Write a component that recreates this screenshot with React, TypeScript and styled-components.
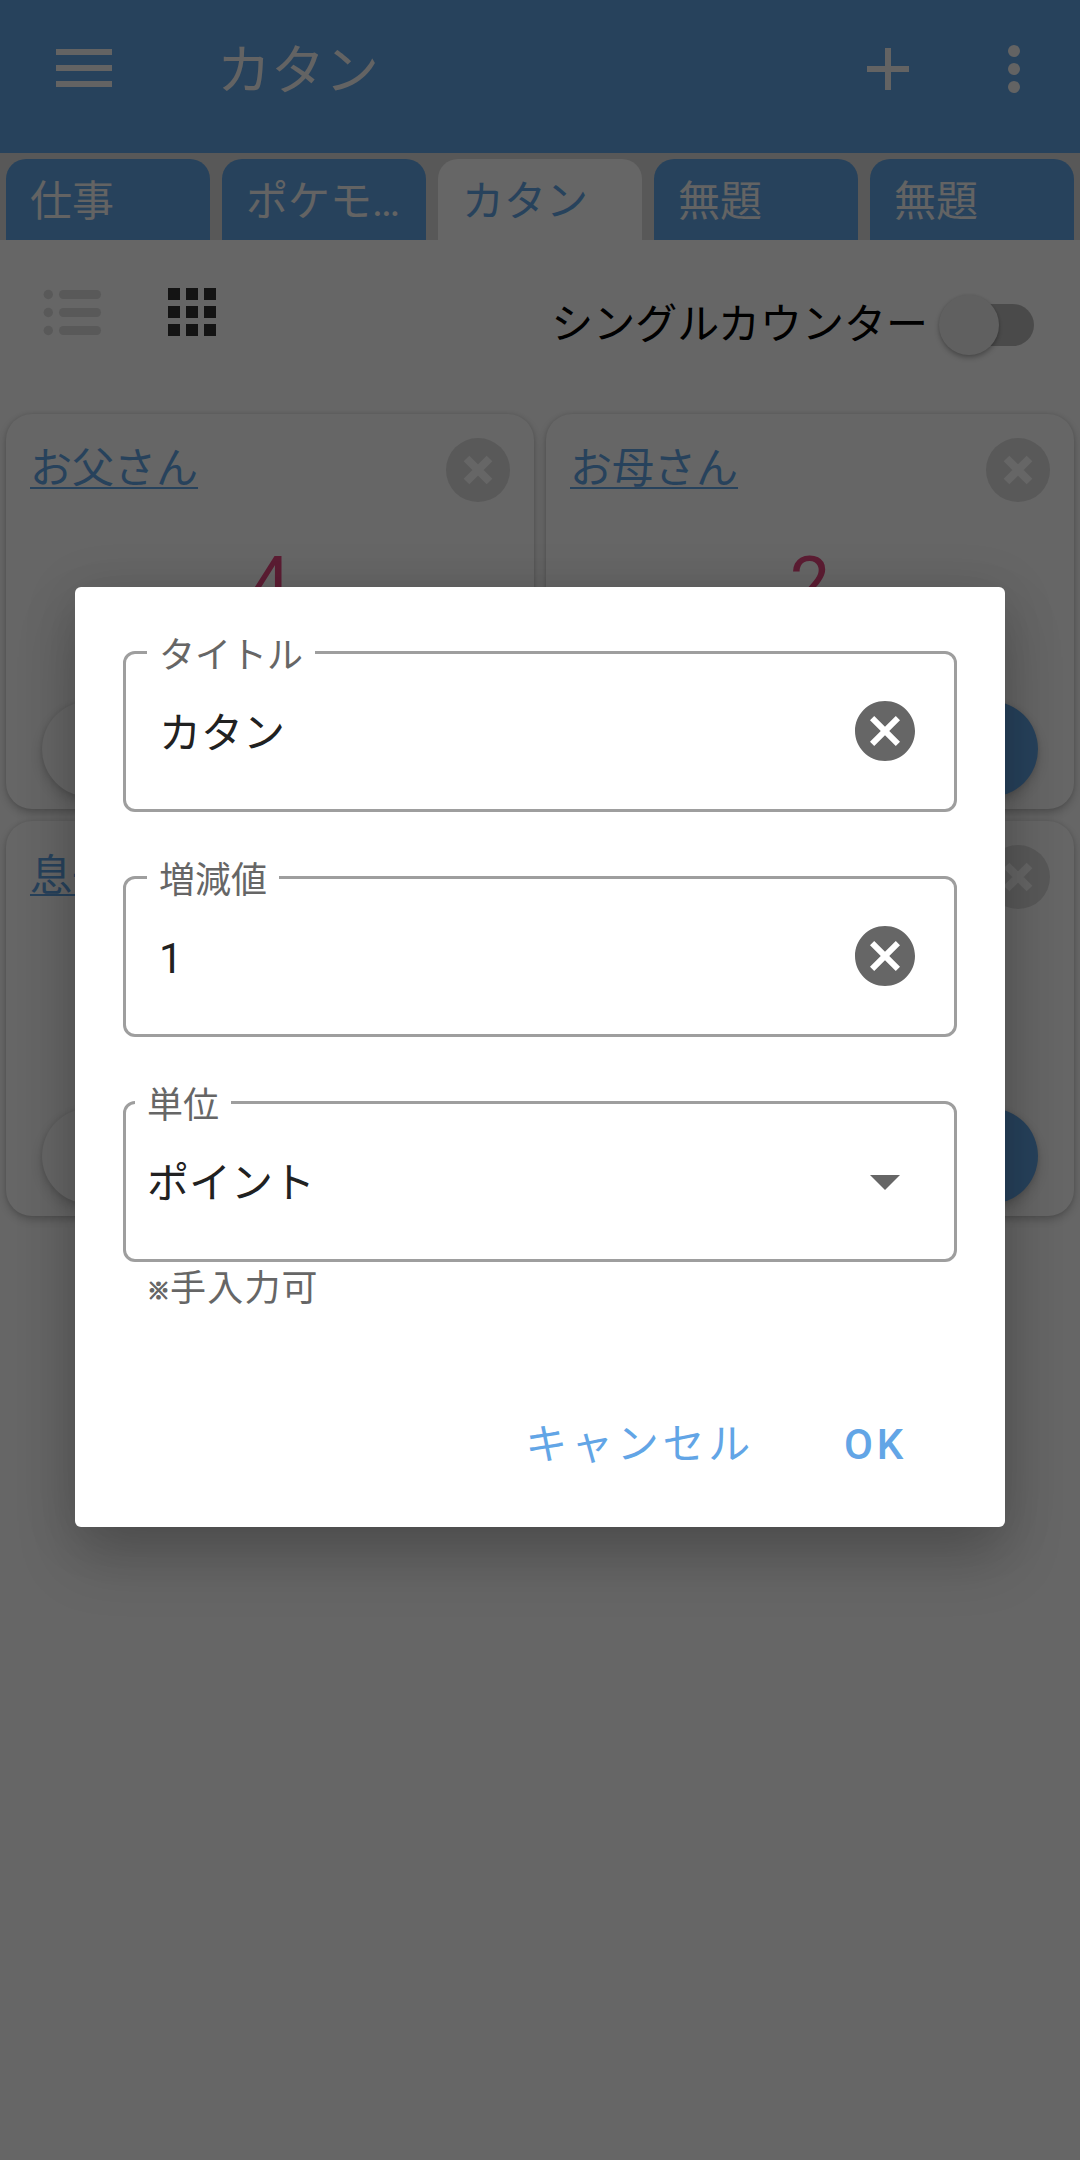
import React from 'react';
import styled, { createGlobalStyle } from 'styled-components';
import { MdCancel, MdArrowDropDown } from 'react-icons/md';

const primary = '#62a5e6';

const GlobalStyle = createGlobalStyle`
  * { box-sizing: border-box; }
  body {
    margin: 0;
    background: #fefefe;
    font-family: Roboto, 'Noto Sans CJK JP', sans-serif;
    font-size: 42px;
    line-height: 60px;
  }
  button { font: inherit; border: 0; padding: 0; background: none; }
`;

const Screen = styled.div`
  position: relative;
  width: 1080px;
  height: 2160px;
  overflow: hidden;
  background: #fefefe;
  display: flex;
  flex-direction: column;
`;

const AppBar = styled.header`
  height: 153px;
  padding: 0 60px 15px 56px;
  background: ${primary};
  color: #f8f8f8;
  display: flex;
  align-items: center;
`;

const AppTitle = styled.h1`
  flex: 1;
  margin: 5px 0 0 105px;
  font-size: 54px;
  font-weight: 400;
  line-height: 72px;
`;

const BarIcon = styled.svg<{ $gap?: number; $lift?: number }>`
  display: block;
  flex: none;
  margin-left: ${(p) => p.$gap ?? 0}px;
  margin-bottom: ${(p) => p.$lift ?? 0}px;
`;

const TabStrip = styled.nav`
  height: 87px;
  padding: 6px 6px 0;
  background: #dcdcdc;
  display: grid;
  grid-template-columns: repeat(5, 1fr);
  column-gap: 12px;
`;

const Tab = styled.div<{ $active: boolean }>`
  min-width: 0;
  padding: 13px 24px 0;
  border-radius: 20px 20px 0 0;
  background: ${(p) => (p.$active ? '#fefefe' : primary)};
  color: ${(p) => (p.$active ? primary : '#f8f8f8')};
  white-space: nowrap;
`;

const Toolbar = styled.div`
  height: 168px;
  padding: 0 46px 0 43px;
  display: flex;
  align-items: flex-start;
`;

const ViewIcons = styled.div`
  flex: 1;
  padding-top: 48px;
  display: flex;
  gap: 66px;
`;

const SwitchLabel = styled.label`
  padding-top: 55px;
  display: flex;
  align-items: center;
  gap: 10px;
  color: #000;
`;

const SwitchTrack = styled.span`
  width: 86px;
  height: 42px;
  margin: 0 0 1px 10px;
  border-radius: 21px;
  background: #bababa;
  display: flex;
  align-items: center;
`;

const SwitchThumb = styled.span`
  width: 60px;
  height: 60px;
  margin-left: -9px;
  border-radius: 50%;
  background: #f1f1f1;
  box-shadow: 0 3px 5px rgba(0, 0, 0, 0.25), 0 0 3px rgba(0, 0, 0, 0.1);
`;

const CardGrid = styled.main`
  padding: 6px;
  display: grid;
  grid-template-columns: 1fr 1fr;
  gap: 12px;
`;

const Card = styled.article`
  height: 395px;
  padding: 24px 24px 12px;
  border-radius: 26px;
  background: #fefefe;
  box-shadow: 0 4px 9px rgba(0, 0, 0, 0.2), 0 0 4px rgba(0, 0, 0, 0.11);
  display: flex;
  flex-direction: column;
`;

const CardHead = styled.div`
  display: flex;
  justify-content: space-between;
  align-items: flex-start;
`;

const CardName = styled.a`
  margin-top: 1px;
  color: ${primary};
  text-decoration: underline;
  text-decoration-thickness: 2px;
  text-underline-offset: 4px;
  text-decoration-skip-ink: none;
`;

const Count = styled.div`
  margin-top: 40px;
  color: #e64980;
  font-size: 72px;
  line-height: 84px;
  text-align: center;
`;

const Stepper = styled.div`
  margin-top: auto;
  padding: 0 12px;
  display: flex;
  justify-content: space-between;
`;

const RoundButton = styled.button<{ $filled?: boolean }>`
  width: 96px;
  height: 96px;
  border-radius: 50%;
  background: ${(p) => (p.$filled ? primary : '#fefefe')};
  color: ${(p) => (p.$filled ? '#fff' : primary)};
  box-shadow: 0 6px 12px rgba(0, 0, 0, 0.18), 0 0 5px rgba(0, 0, 0, 0.1);
`;

const Scrim = styled.div`
  position: absolute;
  inset: 0;
  background: rgba(0, 0, 0, 0.6);
  padding: 587px 75px 0;
`;

const Dialog = styled.section`
  height: 940px;
  padding: 40px 48px 0;
  border-radius: 6px;
  background: #fff;
  box-shadow: 0 32px 60px rgba(0, 0, 0, 0.18), 0 6px 54px rgba(0, 0, 0, 0.13);
  display: flex;
  flex-direction: column;
`;

const Outline = styled.fieldset`
  height: 185px;
  margin: 0 0 40px;
  padding: 0;
  border: 3px solid #9e9e9e;
  border-radius: 12px;
  min-width: 0;
`;

const OutlineLabel = styled.legend<{ $start: number }>`
  height: 51px;
  margin-left: ${(p) => p.$start}px;
  padding: 0 12px;
  color: #666;
  font-size: 36px;
  line-height: 58px;
`;

const FieldRow = styled.div<{ $start: number }>`
  height: 106px;
  padding: 0 33px 0 ${(p) => p.$start}px;
  display: flex;
  align-items: center;
  justify-content: space-between;
  color: #212121;
  svg { display: block; color: #666; }
`;

const FieldValue = styled.span`
  padding-top: 6px;
`;

const Helper = styled.p`
  margin: -38px 0 0 24px;
  color: #666;
  font-size: 36px;
  line-height: 51px;
  letter-spacing: 1.2px;
`;

const NoteMark = styled.span`
  font-size: 23px;
  letter-spacing: 0;
  vertical-align: 2px;
  -webkit-text-stroke: 1.2px #666;
`;

const Actions = styled.div`
  margin-top: 98px;
  padding-right: 50px;
  display: flex;
  justify-content: flex-end;
  gap: 90px;
`;

const TextButton = styled.button`
  color: ${primary};
  font-weight: 500;
  letter-spacing: 3.75px;
  line-height: 60px;
`;

const KanaText = styled.span`
  font-weight: 400;
`;

const RemoveIcon = () => (
  <svg width="64" height="64" viewBox="0 0 64 64">
    <circle cx="32" cy="32" r="32" fill="#dedede" />
    <path d="M20.5 20.5l23 23M43.5 20.5l-23 23" stroke="#fefefe" strokeWidth="8" />
  </svg>
);

const tabs = ['仕事', 'ポケモ…', 'カタン', '無題', '無題'];
const counters = [
  { name: 'お父さん', value: 4 },
  { name: 'お母さん', value: 2 },
  { name: '息子', value: 3 },
  { name: '娘', value: 5 },
];
const fields = [
  { label: 'タイトル', value: 'カタン' },
  { label: '増減値', value: '1' },
];

export default function App() {
  return (
    <>
      <GlobalStyle />
      <Screen>
        <AppBar>
          <BarIcon $lift={2} width="56" height="38" viewBox="0 0 56 38" fill="currentColor">
            <path d="M0 0h56v6H0zM0 16h56v6H0zM0 32h56v6H0z" />
          </BarIcon>
          <AppTitle>カタン</AppTitle>
          <BarIcon width="42" height="42" viewBox="0 0 42 42" fill="currentColor">
            <path d="M18 0h6v18h18v6H24v18h-6V24H0v-6h18z" />
          </BarIcon>
          <BarIcon $gap={99} width="12" height="48" viewBox="0 0 12 48" fill="currentColor">
            <circle cx="6" cy="6" r="6" />
            <circle cx="6" cy="24" r="6" />
            <circle cx="6" cy="42" r="6" />
          </BarIcon>
        </AppBar>
        <TabStrip>
          {tabs.map((t, i) => (
            <Tab key={i} $active={i === 2}>{t}</Tab>
          ))}
        </TabStrip>
        <Toolbar>
          <ViewIcons>
            <svg width="59" height="48" viewBox="0 0 59 48" fill="#dedede">
              {[6.5, 24.5, 42.5].map((y) => (
                <g key={y}>
                  <circle cx="5.3" cy={y} r="4.7" />
                  <rect x="16" y={y - 4.5} width="42" height="9" rx="4.5" />
                </g>
              ))}
            </svg>
            <svg width="48" height="48" viewBox="0 0 48 48" fill="#323232">
              {[0, 18, 36].map((y) =>
                [0, 18, 36].map((x) => <rect key={`${x}-${y}`} x={x} y={y} width="12" height="12" />)
              )}
            </svg>
          </ViewIcons>
          <SwitchLabel>
            シングルカウンター
            <SwitchTrack><SwitchThumb /></SwitchTrack>
          </SwitchLabel>
        </Toolbar>
        <CardGrid>
          {counters.map((c) => (
            <Card key={c.name}>
              <CardHead>
                <CardName>{c.name}</CardName>
                <RemoveIcon />
              </CardHead>
              <Count>{c.value}</Count>
              <Stepper>
                <RoundButton />
                <RoundButton $filled />
              </Stepper>
            </Card>
          ))}
        </CardGrid>
        <Scrim>
          <Dialog>
            {fields.map((f) => (
              <Outline key={f.label}>
                <OutlineLabel $start={21}>{f.label}</OutlineLabel>
                <FieldRow $start={33}>
                  <FieldValue>{f.value}</FieldValue>
                  <MdCancel size={72} />
                </FieldRow>
              </Outline>
            ))}
            <Outline>
              <OutlineLabel $start={9}>単位</OutlineLabel>
              <FieldRow $start={21}>
                <FieldValue>ポイント</FieldValue>
                <MdArrowDropDown size={72} />
              </FieldRow>
            </Outline>
            <Helper><NoteMark>※</NoteMark>手入力可</Helper>
            <Actions>
              <TextButton><KanaText>キャンセル</KanaText></TextButton>
              <TextButton>OK</TextButton>
            </Actions>
          </Dialog>
        </Scrim>
      </Screen>
    </>
  );
}
